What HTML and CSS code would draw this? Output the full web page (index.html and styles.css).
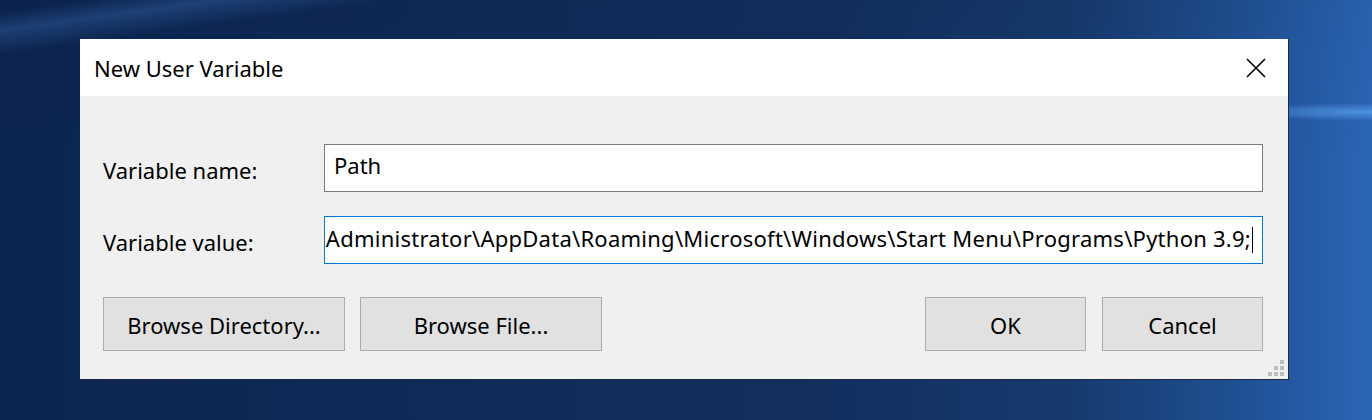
FILE: index.html
```html
<!DOCTYPE html>
<html lang="en">
<head>
    <meta charset="UTF-8">
    <title>New User Variable</title>
    <link rel="stylesheet" href="styles.css">
</head>
<body>
    <div class="dialog">
        <div class="title-bar">
            <span class="title">New User Variable</span>
            <button class="close-btn" aria-label="Close">
                <svg width="20" height="20" viewBox="0 0 20 20">
                    <path d="M1 1 L19 19 M19 1 L1 19" stroke="#000" stroke-width="1.6" fill="none"/>
                </svg>
            </button>
        </div>

        <div class="dialog-body">
            <div class="form">
                <label class="label">Variable name:</label>
                <div class="field">
                    <span class="field-text">Path</span>
                </div>

                <label class="label">Variable value:</label>
                <div class="field field-focus">
                    <span class="field-text">Administrator\AppData\Roaming\Microsoft\Windows\Start Menu\Programs\Python 3.9;</span>
                    <span class="caret"></span>
                </div>
            </div>

            <div class="buttons">
                <div class="btn-group">
                    <button class="btn btn-wide">Browse Directory...</button>
                    <button class="btn btn-wide">Browse File...</button>
                </div>
                <div class="btn-group btn-group-right">
                    <button class="btn">OK</button>
                    <button class="btn">Cancel</button>
                </div>
            </div>

            <!-- resize grip -->
            <div class="grip">
                <span></span><span></span><span class="on"></span>
                <span></span><span class="on"></span><span class="on"></span>
                <span class="on"></span><span class="on"></span><span class="on"></span>
            </div>
        </div>
    </div>
</body>
</html>
```

FILE: styles.css
```css
/* Base styles */
* {
    margin: 0;
    padding: 0;
    box-sizing: border-box;
}

:root {
    --face: #f0f0f0;
    --btn: #e1e1e1;
    --btn-border: #adadad;
    --field-border: #7a7a7a;
    --focus: #0078d7;
    --text: #000;
}

body {
    width: 1372px;
    height: 420px;
    overflow: hidden;
    font-family: 'Noto Sans', 'Open Sans', sans-serif;
    color: var(--text);
    background:
        radial-gradient(ellipse 160px 9px at 1372px 112px, rgba(90, 160, 240, 0.75), transparent),
        linear-gradient(172deg, transparent 2%, rgba(60, 115, 190, 0.35) 5%, transparent 9%),
        linear-gradient(180deg, rgba(0, 0, 0, 0.05), transparent 40%),
        linear-gradient(90deg, #0c2550 0%, #0f2a57 30%, #122f5e 60%, #163a6e 78%, #1f4f92 90%, #2b66b6 100%);
    padding: 39px 0 0 80px;
}

/* Dialog window */
.dialog {
    position: relative;
    width: 1209px;
    height: 341px;
    background: var(--face);
    border-right: 1px solid #1c2a42;
    border-bottom: 1px solid #1c2a42;
    display: flex;
    flex-direction: column;
}

.title-bar {
    height: 57px;
    background: #fff;
    display: flex;
    align-items: center;
    justify-content: space-between;
    padding-left: 14px;
    padding-right: 22px;
}

.title {
    font-size: 22px;
}

.close-btn {
    border: none;
    background: none;
    width: 20px;
    height: 20px;
    display: flex;
}

.dialog-body {
    flex: 1;
    padding: 48px 25px 0 23px;
}

/* Form rows */
.form {
    display: grid;
    grid-template-columns: 221px 1fr;
    row-gap: 24px;
    align-items: center;
}

.label {
    font-size: 22px;
    padding-top: 3px;
}

.field {
    height: 48px;
    background: #fff;
    border: 1px solid var(--field-border);
    display: flex;
    align-items: center;
    overflow: hidden;
    white-space: nowrap;
    padding: 0 9px 7px 9px;
    font-size: 22px;
}

.field-focus {
    border-color: var(--focus);
    justify-content: flex-end;
    padding: 0 9px 5px 2px;
    letter-spacing: 0.25px;
}

.field-text {
    flex-shrink: 0;
}

.caret {
    flex-shrink: 0;
    width: 1px;
    height: 26px;
    margin-top: 5px;
    margin-left: 1px;
    background: #000;
}

/* Buttons */
.buttons {
    display: flex;
    justify-content: space-between;
    margin-top: 33px;
}

.btn-group {
    display: flex;
    gap: 15px;
}

.btn-group-right {
    gap: 16px;
}

.btn {
    width: 161px;
    height: 54px;
    background: var(--btn);
    border: 1px solid var(--btn-border);
    font-family: inherit;
    font-size: 22px;
    color: var(--text);
    padding-top: 2px;
}

.btn-wide {
    width: 242px;
}

/* Size grip */
.grip {
    position: absolute;
    right: 4px;
    bottom: 3px;
    display: grid;
    grid-template-columns: repeat(3, 4px);
    gap: 2px;
}

.grip span {
    width: 4px;
    height: 4px;
}

.grip .on {
    background: #bdbdbd;
}
```
